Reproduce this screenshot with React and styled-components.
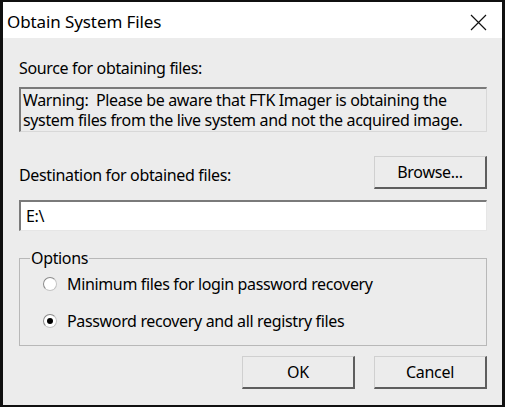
import React from "react";
import styled, { createGlobalStyle } from "styled-components";

const Global = createGlobalStyle`
  html, body { margin: 0; padding: 0; background: #000; }
  body { font-family: "Noto Sans", "Liberation Sans", sans-serif; }
  * { box-sizing: border-box; }
`;

const Window = styled.div`
  width: 505px;
  height: 407px;
  display: flex;
  flex-direction: column;
  border-style: solid;
  border-color: #101010;
  border-width: 2px 3px 2px 3px;
  background: #ececec;
  color: #000;
  font-size: 16px;
  line-height: 20px;
  letter-spacing: -0.35px;
`;

const TitleBar = styled.div`
  height: 36px;
  flex: none;
  background: #fff;
  display: flex;
  align-items: center;
  justify-content: space-between;
  padding: 4px 15px 0 4px;
`;

const Title = styled.div`
  font-size: 17px;
  letter-spacing: -0.1px;
`;

const Body = styled.div`
  flex: 1;
  display: flex;
  flex-direction: column;
  padding: 20px 15px 0 16px;
`;

const Label = styled.div``;

const Sunken = styled.div`
  margin-top: 9px;
  height: 45px;
  padding: 1px 2px 0 2px;
  border-style: solid;
  border-width: 2px 1px 1px 2px;
  border-color: #7a7a7a #d8d8d8 #d8d8d8 #7a7a7a;
  line-height: 20px;
`;

const DestRow = styled.div`
  margin-top: 24px;
  display: flex;
  align-items: center;
  justify-content: space-between;
`;

const DestLabel = styled(Label)`
  margin-top: 5px;
`;

const Button = styled.button`
  width: 113px;
  height: 33px;
  padding: 0;
  font-family: inherit;
  font-size: 16px;
  letter-spacing: -0.3px;
  color: #000;
  background: #ececec;
  border-style: solid;
  border-width: 1px 2px 2px 1px;
  border-color: #d0d0d0 #5e5e5e #5e5e5e #d0d0d0;
`;

const TextBox = styled.div`
  margin-top: 11px;
  height: 31px;
  background: #fff;
  display: flex;
  align-items: center;
  padding-left: 5px;
  border-style: solid;
  border-width: 2px 1px 1px 2px;
  border-color: #7a7a7a #e6e6e6 #e6e6e6 #7a7a7a;
`;

const Group = styled.fieldset`
  margin: 19px 0 0 0;
  padding: 8px 0 0 23px;
  height: 96px;
  border: 1px solid #b8b8b8;
  display: flex;
  flex-direction: column;
  gap: 17px;
`;

const Legend = styled.legend`
  margin-left: -13px;
  padding: 0 1px;
  line-height: 16px;
`;

const RadioRow = styled.label`
  display: flex;
  align-items: center;
  gap: 10px;
  height: 20px;
`;

const RadioMark = styled.span`
  width: 14px;
  height: 14px;
  border-radius: 50%;
  background: #fff;
  border: 1px solid #c4c4c4;
  border-top-color: #8a8a8a;
  border-left-color: #8a8a8a;
  display: flex;
  align-items: center;
  justify-content: center;
  &::after {
    content: "";
    width: 6px;
    height: 6px;
    border-radius: 50%;
    background: ${(p) => (p.$checked ? "#000" : "transparent")};
  }
`;

const Footer = styled.div`
  margin-top: 10px;
  display: flex;
  justify-content: flex-end;
  gap: 19px;
`;

const CloseIcon = () => (
  <svg width="17" height="17" viewBox="0 0 17 17">
    <path d="M1 1 L16 16 M16 1 L1 16" stroke="#111" strokeWidth="1.2" fill="none" />
  </svg>
);

export default function App() {
  return (
    <>
      <Global />
      <Window>
        <TitleBar>
          <Title>Obtain System Files</Title>
          <CloseIcon />
        </TitleBar>
        <Body>
          <Label>Source for obtaining files:</Label>
          <Sunken>
            Warning:&nbsp; Please be aware that FTK Imager is obtaining the
            <br />
            system files from the live system and not the acquired image.
          </Sunken>
          <DestRow>
            <DestLabel>Destination for obtained files:</DestLabel>
            <Button>Browse...</Button>
          </DestRow>
          <TextBox>E:\</TextBox>
          <Group>
            <Legend>Options</Legend>
            <RadioRow>
              <RadioMark />
              Minimum files for login password recovery
            </RadioRow>
            <RadioRow>
              <RadioMark $checked />
              Password recovery and all registry files
            </RadioRow>
          </Group>
          <Footer>
            <Button>OK</Button>
            <Button>Cancel</Button>
          </Footer>
        </Body>
      </Window>
    </>
  );
}
